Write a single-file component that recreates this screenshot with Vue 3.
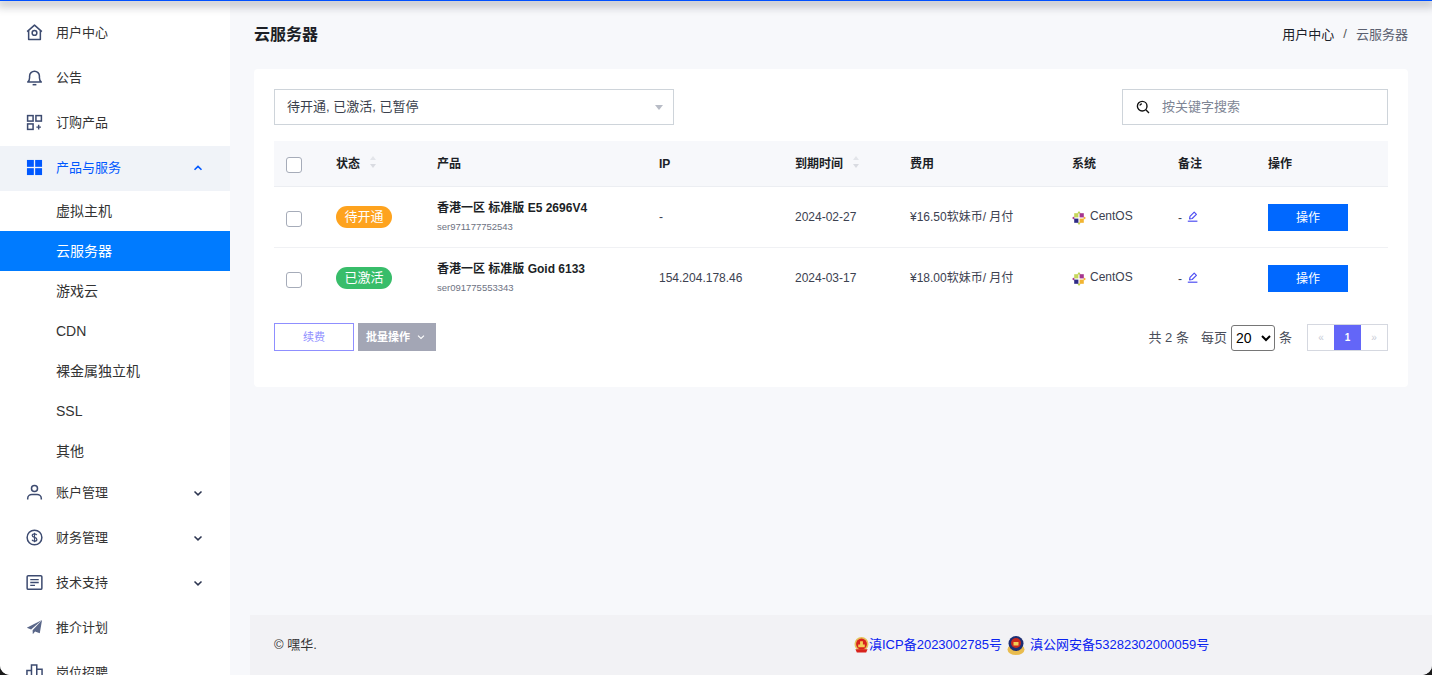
<script setup>
const topNav = [
  { label: '用户中心', icon: 'home' },
  { label: '公告', icon: 'bell' },
  { label: '订购产品', icon: 'grid' },
]
const subNav = [
  { label: '虚拟主机' },
  { label: '云服务器', active: true },
  { label: '游戏云' },
  { label: 'CDN', latin: true },
  { label: '裸金属独立机' },
  { label: 'SSL', latin: true },
  { label: '其他' },
]
const bottomNav = [
  { label: '账户管理', icon: 'user', arrow: true },
  { label: '财务管理', icon: 'money', arrow: true },
  { label: '技术支持', icon: 'doc', arrow: true },
  { label: '推介计划', icon: 'plane' },
  { label: '岗位招聘', icon: 'bars' },
]
const rows = [
  { status: '待开通', cls: 'orange', name: '香港一区 标准版 E5 2696V4', sn: 'ser971177752543', ip: '-', date: '2024-02-27', fee: '¥16.50软妹币/ 月付' },
  { status: '已激活', cls: 'green', name: '香港一区 标准版 Goid 6133', sn: 'ser091775553343', ip: '154.204.178.46', date: '2024-03-17', fee: '¥18.00软妹币/ 月付' },
]
</script>

<template>
  <div class="page">
    <div class="topline"></div>
    <aside class="side">
      <a v-for="n in topNav" :key="n.label" class="nav">
        <svg class="ico" viewBox="0 0 18 18" fill="none" stroke="#3d4b70" stroke-width="1.6">
          <template v-if="n.icon === 'home'">
            <path d="M1.200 8 9 1.200 16.800 8M2.800 6.800V16.500h12.400V6.800" stroke-linejoin="round" />
            <circle cx="9" cy="9.500" r="2.500" />
          </template>
          <template v-else-if="n.icon === 'bell'">
            <path d="M1.800 13.800c1.400-1.200 2-2.400 2-4.600V7.500a5.200 5.200 0 0 1 10.400 0v1.700c0 2.200.6 3.400 2 4.600z" stroke-linejoin="round" />
            <path d="M7 16.600h4" />
          </template>
          <template v-else>
            <rect x="1.700" y="1.700" width="5.800" height="5.800" />
            <rect x="10.500" y="1.700" width="5.800" height="5.800" />
            <rect x="1.700" y="10.500" width="5.800" height="5.800" />
            <path d="M13.400 11.500v4.800M11 13.900h4.800" stroke-width="1.500" />
          </template>
        </svg>
        <span class="navtxt">{{ n.label }}</span>
      </a>

      <a class="nav on">
        <svg class="ico" viewBox="0 0 18 18" fill="#0058ff">
          <rect x="1" y="1" width="7.300" height="7.300" />
          <rect x="9.700" y="1" width="7.300" height="7.300" />
          <rect x="1" y="9.700" width="7.300" height="7.300" />
          <rect x="9.700" y="9.700" width="7.300" height="7.300" />
        </svg>
        <span class="navtxt">产品与服务</span>
        <svg class="chev" viewBox="0 0 10 10" fill="none" stroke="#0058ff" stroke-width="1.600"><path d="M1.500 6.800 5 3.400l3.500 3.400" /></svg>
      </a>
      <a v-for="s in subNav" :key="s.label" class="sub" :class="{ active: s.active, latin: s.latin }">{{ s.label }}</a>

      <a v-for="n in bottomNav" :key="n.label" class="nav">
        <svg class="ico" viewBox="0 0 18 18" fill="none" stroke="#3d4b70" stroke-width="1.600">
          <template v-if="n.icon === 'user'">
            <circle cx="9" cy="4.800" r="3.200" />
            <path d="M1.800 16.500v-1.200c0-2.700 2.200-4.200 4.400-4.200h5.600c2.200 0 4.400 1.500 4.400 4.200v1.200" />
          </template>
          <template v-else-if="n.icon === 'money'">
            <circle cx="9" cy="9" r="7.800" />
            <path d="M11.400 6.500C11 5.500 10 5.200 9 5.200c-1.300 0-2.400.6-2.400 1.800 0 2.600 4.900 1.300 4.900 4 0 1.200-1.100 1.800-2.500 1.800-1.100 0-2.200-.4-2.600-1.500M9 4v10" stroke-width="1.300" />
          </template>
          <template v-else-if="n.icon === 'doc'">
            <rect x="1.200" y="1.800" width="15.600" height="14.400" rx="1.200" />
            <path d="M4.500 6h9M4.500 9h9M4.500 12h5" stroke-width="1.400" />
          </template>
          <template v-else-if="n.icon === 'plane'">
            <path d="M17 1 0.800 9.200l4.600 1.900z" fill="#5a6789" stroke="none" />
            <path d="M17 1 7 11.800l.2 4.400 2.400-3 5 2z" fill="#5a6789" stroke="none" />
          </template>
          <template v-else>
            <path d="M1 17V7h4.800V1h5.600v4.500H17V17zM5.800 7v10M11.400 5.500V17" />
          </template>
        </svg>
        <span class="navtxt">{{ n.label }}</span>
        <svg v-if="n.arrow" class="chev" viewBox="0 0 10 10" fill="none" stroke="#2c3550" stroke-width="1.500"><path d="M1.500 3.500 5 6.900l3.500-3.400" /></svg>
      </a>
    </aside>

    <main class="main">
      <header class="head">
        <h1>云服务器</h1>
        <div class="crumb"><span class="c1">用户中心</span><span class="sep">/</span><span class="c2">云服务器</span></div>
      </header>

      <section class="card">
        <div class="filters">
          <div class="multi">
            <span class="txt">待开通, 已激活, 已暂停</span>
            <i class="caret"></i>
          </div>
          <div class="search">
            <svg class="sico" viewBox="0 0 14 14" fill="none" stroke="#111" stroke-width="1.400">
              <circle cx="6.200" cy="6.200" r="4.800" />
              <path d="M9.800 9.800 13 13M3.800 5.500c.4-1 1.200-1.500 2.200-1.600" />
            </svg>
            <span class="txt">按关键字搜索</span>
          </div>
        </div>

        <table class="tbl">
          <colgroup>
            <col class="w50" /><col class="w101" /><col class="w222" /><col class="w136" /><col class="w115" /><col class="w162" /><col class="w106" /><col class="w90" /><col />
          </colgroup>
          <thead>
            <tr>
              <th class="ck"><i class="box head-box"></i></th>
              <th><span class="sort-h">状态<i class="sort"></i></span></th>
              <th class="up">产品</th>
              <th class="down">IP</th>
              <th><span class="sort-h">到期时间<i class="sort"></i></span></th>
              <th class="up">费用</th>
              <th class="up">系统</th>
              <th class="up">备注</th>
              <th class="up">操作</th>
            </tr>
          </thead>
          <tbody>
            <tr v-for="r in rows" :key="r.sn">
              <td class="ck"><i class="box low"></i></td>
              <td><span class="pill" :class="r.cls">{{ r.status }}</span></td>
              <td>
                <div class="pname">{{ r.name }}</div>
                <div class="psn">{{ r.sn }}</div>
              </td>
              <td>{{ r.ip }}</td>
              <td>{{ r.date }}</td>
              <td class="lift">{{ r.fee }}</td>
              <td class="sink">
                <span class="os">
                  <svg class="cent" viewBox="0 0 14 14">
                    <path d="M7 0 8.800 2.400H5.200z" fill="#b8d24a" />
                    <path d="M14 7 11.600 8.800V5.200z" fill="#f2b431" />
                    <path d="M7 14 5.200 11.600h3.600z" fill="#b8d24a" />
                    <path d="M0 7 2.400 5.200v3.600z" fill="#a5348f" />
                    <path d="M2.200 2.200h4.200v4.200H2.200z" fill="#c6d65a" />
                    <path d="M7.600 2.200h4.200v4.200H7.600z" fill="#a5348f" />
                    <path d="M2.200 7.600h4.200v4.200H2.200z" fill="#2f2a86" />
                    <path d="M7.600 7.600h4.200v4.200H7.600z" fill="#f2b431" />
                  </svg>
                  CentOS
                </span>
              </td>
              <td class="sink">
                <span class="note">-
                  <svg class="pen" viewBox="0 0 11 11" fill="none" stroke="#4f4ff2" stroke-width="1.200">
                    <path d="M2.600 7.800 3 5.400 7.200 1.200 9.400 3.400 5.200 7.500z" stroke-linejoin="round" />
                    <path d="M0.800 10.200h9.600" />
                  </svg>
                </span>
              </td>
              <td><button class="op">操作</button></td>
            </tr>
          </tbody>
        </table>

        <div class="bar">
          <div class="acts">
            <button class="renew">续费</button>
            <button class="batch"><span>批量操作</span><svg viewBox="0 0 8 8" fill="none" stroke="#fff" stroke-width="1.100"><path d="M1 2.600 4 5.400l3-2.800" /></svg></button>
          </div>
          <div class="pg">
            <span class="txt total">共 2 条</span>
            <span class="txt per">每页</span>
            <select class="size"><option>20</option></select>
            <span class="txt unit">条</span>
            <div class="pager">
              <span class="pc">«</span><span class="pc cur">1</span><span class="pc">»</span>
            </div>
          </div>
        </div>
      </section>

      <div class="grow"></div>

      <footer class="foot">
        <span class="txt copy">© 嘿华.</span>
        <div class="links">
          <svg class="gh" viewBox="0 0 16 18">
            <circle cx="8" cy="8.500" r="7.500" fill="#e6c15a" />
            <circle cx="8" cy="8.500" r="5.800" fill="#d8231c" />
            <path d="M4.500 9h7v3h-7zM6.500 5.500h3V9h-3z" fill="#f3cf56" />
            <path d="M1.500 14h13l-1.500 3.500H3z" fill="#d8231c" />
          </svg>
          <a class="txt lk">滇ICP备2023002785号</a>
          <svg class="jh" viewBox="0 0 18 20">
            <ellipse cx="9" cy="14" rx="8.500" ry="5.500" fill="#e9bc4e" />
            <circle cx="9" cy="8" r="7.500" fill="#1d2f74" />
            <circle cx="9" cy="7.500" r="5" fill="#c92a1f" />
            <path d="M6.500 6.500h5V10h-5z" fill="#f3cf56" />
          </svg>
          <a class="txt lk">滇公网安备53282302000059号</a>
        </div>
      </footer>
    </main>
  </div>
</template>

<style>
html, body { margin: 0; background: #1a1a1a; }
</style>

<style scoped>
.page {
  position: relative;
  display: flex;
  width: 1432px;
  height: 675px;
  overflow: hidden;
  border-radius: 0 0 10px 10px;
  background: #f7f8fb;
  font-family: "Liberation Sans", "Noto Sans CJK SC", sans-serif;
  color: #2b2f38;
  font-size: 12px;
}
.topline {
  position: absolute;
  left: 0;
  right: 0;
  top: 0;
  height: 1px;
  background: #0050ff;
  box-shadow: 0 2px 10px 3px rgba(20, 22, 40, .3);
  z-index: 3;
}
.txt { padding-bottom: 3px; }
.navtxt { padding-bottom: 5px; }
.side {
  flex: 0 0 230px;
  padding-top: 11px;
  background: #fff;
  box-sizing: border-box;
}
.nav {
  display: flex;
  align-items: center;
  height: 45px;
  padding-left: 26px;
  font-size: 13px;
  color: #333;
}
.nav.on { background: #f0f3f8; color: #0058ff; }
.ico { width: 17px; height: 17px; margin: 0 13px 2px 0; flex: none; }
.chev { width: 10px; height: 10px; margin: 0 27px 2px auto; }
.sub {
  display: flex;
  align-items: center;
  height: 40px;
  box-sizing: border-box;
  padding: 0 0 2px 56px;
  font-size: 14px;
  color: #333;
}
.sub.latin { padding-bottom: 0; }
.sub.active { background: #007bff; color: #fff; }
.main {
  flex: 1;
  display: flex;
  flex-direction: column;
  min-width: 0;
}
.head {
  height: 69px;
  box-sizing: border-box;
  padding-bottom: 3px;
  margin: 0 24px;
  display: flex;
  align-items: center;
  justify-content: space-between;
}
h1 { margin: 0; font-size: 16px; font-weight: 700; color: #1c1f26; padding-bottom: 1px; }
.crumb { font-size: 13px; display: flex; align-items: center; }
.c1 { color: #1d2129; }
.c2 { color: #5b6070; }
.sep { margin: 0 9px; color: #555; }
.card {
  margin: 0 24px;
  height: 318px;
  padding: 20px 20px 0;
  box-sizing: border-box;
  background: #fff;
  border-radius: 4px;
}
.filters { display: flex; justify-content: space-between; }
.multi {
  width: 400px;
  height: 36px;
  box-sizing: border-box;
  border: 1px solid #ced4da;
  padding: 0 13px 0 12px;
  display: flex;
  align-items: center;
  justify-content: space-between;
  font-size: 13px;
  color: #3a3f4c;
}
.caret {
  width: 0;
  height: 0;
  border-left: 4px solid transparent;
  border-right: 4px solid transparent;
  border-top: 5px solid #b8bcc6;
  margin-right: -3px;
}
.search {
  width: 266px;
  height: 36px;
  box-sizing: border-box;
  border: 1px solid #ced4da;
  padding-left: 13px;
  display: flex;
  align-items: center;
  font-size: 13px;
  color: #7e8594;
}
.sico { width: 14px; height: 14px; margin-right: 12px; }
.tbl {
  width: 100%;
  margin-top: 16px;
  border-collapse: collapse;
  table-layout: fixed;
}
.w50 { width: 50px; }
.w101 { width: 101px; }
.w222 { width: 222px; }
.w136 { width: 136px; }
.w115 { width: 115px; }
.w162 { width: 162px; }
.w106 { width: 106px; }
.w90 { width: 90px; }
th {
  height: 45px;
  padding: 0 0 0 12px;
  box-sizing: border-box;
  background: #f7f8fb;
  border-bottom: 1px solid #eceef2;
  text-align: left;
  font-size: 12px;
  font-weight: 700;
  color: #1c1f26;
}
td {
  height: 61px;
  box-sizing: border-box;
  padding: 0 0 0 12px;
  border-bottom: 1px solid #f0f1f4;
  font-size: 12px;
  color: #3c4150;
  vertical-align: middle;
}
tbody tr:last-child td { border-bottom: 0; }
th.up { padding-bottom: 1px; }
th.down { padding-top: 2px; }
td.lift { padding-bottom: 3px; }
td.sink { padding-top: 2px; }
.sort-h { padding-bottom: 2px; }
.ck { padding-left: 12px; }
.box {
  display: block;
  width: 16px;
  height: 16px;
  box-sizing: border-box;
  border: 1px solid #a6acb9;
  border-radius: 3px;
  background: #fff;
}
.box.low { margin-top: 5px; }
.box.head-box { margin-top: 3px; }
.sort-h { display: inline-flex; align-items: center; }
.sort {
  position: relative;
  display: inline-block;
  width: 8px;
  height: 12px;
  margin-left: 10px;
}
.sort::before, .sort::after {
  content: "";
  position: absolute;
  left: 0;
  border-left: 3.500px solid transparent;
  border-right: 3.500px solid transparent;
}
.sort::before { top: 0; border-bottom: 4.500px solid #e3e5ea; }
.sort::after { bottom: 0; border-top: 4.500px solid #d9dbe1; }
.pill {
  display: inline-block;
  width: 56px;
  height: 22px;
  line-height: 22px;
  border-radius: 11px;
  text-align: center;
  font-size: 13px;
  color: #fff;
}
.orange { background: #fea31e; }
.green { background: #38bd6a; }
.pname { font-weight: 700; color: #1c1f26; line-height: 16px; }
.psn { margin-top: 4px; font-size: 9.500px; line-height: 14px; color: #6d7282; }
.os { display: inline-flex; align-items: center; }
.cent { width: 14px; height: 14px; margin-right: 4px; transform: translateY(2px); }
.note { display: inline-flex; align-items: center; }
.pen { width: 11px; height: 11px; margin: -3px 0 0 5px; }
.op {
  display: block;
  width: 80px;
  height: 27px;
  margin-top: 1px;
  border: 0;
  padding: 0 0 1px;
  background: #0068ff;
  color: #fff;
  font: inherit;
  font-size: 12px;
}
.bar {
  display: flex;
  justify-content: space-between;
  align-items: flex-start;
  margin-top: 16px;
}
.acts { display: flex; gap: 4px; margin-top: -1px; }
.renew {
  width: 80px;
  height: 28px;
  box-sizing: border-box;
  border: 1px solid #8f8fff;
  background: #fff;
  color: #8f8fff;
  padding: 0 0 2px;
  font: inherit;
  font-size: 11px;
}
.batch {
  width: 78px;
  height: 28px;
  border: 0;
  padding: 0 0 2px 8px;
  background: #a3a6b5;
  color: #fff;
  font: inherit;
  font-size: 11px;
  font-weight: 700;
  display: flex;
  align-items: center;
}
.batch svg { width: 8px; height: 8px; margin: 2px 0 0 7px; }
.pg { display: flex; align-items: center; height: 27px; font-size: 13px; color: #4a4e5a; }
.per { margin-left: 12px; }
.size {
  width: 44px;
  height: 26px;
  margin-left: 4px;
  font-family: "Liberation Sans", sans-serif;
  font-size: 14px;
  color: #000;
  background: #fff;
  border: 1px solid #767676;
  border-radius: 3px;
}
.unit { margin-left: 4px; }
.pager {
  display: flex;
  width: 81px;
  margin-left: 15px;
  height: 27px;
  box-sizing: border-box;
  border: 1px solid #d5d8e0;
}
.pc {
  flex: 1;
  display: flex;
  align-items: center;
  justify-content: center;
  font-size: 10px;
  color: #c8ccd6;
}
.pc.cur { flex: none; width: 27px; background: #6366f8; color: #fff; font-weight: 700; }
.grow { flex: 1; }
.foot {
  height: 60px;
  margin-left: 20px;
  padding-left: 24px;
  display: flex;
  align-items: center;
  background: #f2f2f5;
  font-size: 13px;
  color: #333;
}
.copy { width: 580px; flex: none; }
.links { display: flex; align-items: center; }
.lk { color: #0a22f0; }
.gh { width: 15px; height: 17px; margin-bottom: 1px; }
.jh { width: 18px; height: 21px; margin: 0 5px; }
</style>
